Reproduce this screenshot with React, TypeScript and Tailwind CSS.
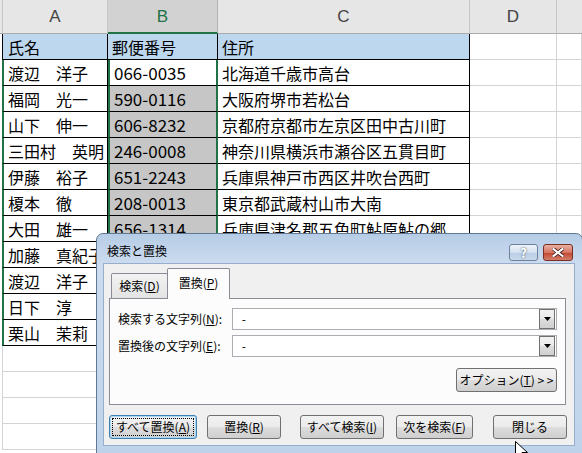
import React from 'react';

const rows: [string, string, string][] = [
    ['渡辺　洋子', '066-0035', '北海道千歳市高台'],
    ['福岡　光一', '590-0116', '大阪府堺市若松台'],
    ['山下　伸一', '606-8232', '京都府京都市左京区田中古川町'],
    ['三田村　英明', '246-0008', '神奈川県横浜市瀬谷区五貫目町'],
    ['伊藤　裕子', '651-2243', '兵庫県神戸市西区井吹台西町'],
    ['榎本　徹', '208-0013', '東京都武蔵村山市大南'],
    ['大田　雄一', '656-1314', '兵庫県津名郡五色町鮎原鮎の郷'],
    ['加藤　真紀子', '', ''],
    ['渡辺　洋子', '', ''],
    ['日下　淳', '', ''],
    ['栗山　茉莉', '', ''],
];

const grid = 'border-r border-b border-[#d4d4d4]';

function ColumnHeaders() {
    return (
        <div className="flex h-[34px] text-[17px] text-[#444] font-['Liberation_Sans',sans-serif]">
            <div className="w-[2px] bg-[#e6e6e6] border-b border-[#ababab]" />
            <div className="w-[106px] flex items-center justify-center bg-[#e6e6e6] border-l border-r border-b border-[#c6c6c6] border-b-[#ababab]">A</div>
            <div className="w-[110px] flex items-center justify-center bg-[#d2d2d2] text-[#217346] border-r border-[#b4b4b4] border-b-2 border-b-[#217346]">B</div>
            <div className="w-[252px] flex items-center justify-center bg-[#e6e6e6] border-r border-b border-[#c6c6c6] border-b-[#ababab]">C</div>
            <div className="w-[87px] flex items-center justify-center bg-[#e6e6e6] border-r border-b border-[#c6c6c6] border-b-[#ababab]">D</div>
            <div className="flex-1 bg-[#e6e6e6] border-b border-[#ababab]" />
        </div>
    );
}

function Sheet() {
    return (
        <div className="text-[16px] text-black font-['Noto_Sans_CJK_JP',sans-serif] leading-none">
            <ColumnHeaders />
            <div className="flex h-[26px]">
                <div className="w-[2px] bg-white" />
                <div className="w-[106px] flex items-center pl-[5px] bg-[#bdd7ee] border-l border-r border-b border-black">氏名</div>
                <div className="w-[110px] flex items-center pl-[4px] bg-[#bdd7ee] border-r border-b border-black">郵便番号</div>
                <div className="w-[252px] flex items-center pl-[4px] bg-[#bdd7ee] border-r border-b border-black">住所</div>
                <div className={`w-[87px] ${grid}`} />
                <div className={`flex-1 ${grid}`} />
            </div>
            {rows.map((r, i) => (
                <div key={i} className="flex h-[26px]">
                    <div className="w-[2px] bg-white" />
                    <div className="w-[106px] flex items-center pl-[4px] whitespace-nowrap overflow-hidden border-l-2 border-l-[#217346] border-r border-b border-black">{r[0]}</div>
                    <div className={`w-[110px] flex items-center pl-[4px] text-[17px] border-l-2 border-r-2 border-[#217346] border-b border-b-black ${i === 0 ? 'bg-white' : 'bg-[#c6c6c6]'} ${i === rows.length - 1 ? 'border-b-2 border-b-[#217346]' : ''}`}>{r[1]}</div>
                    <div className="w-[252px] flex items-center pl-[4px] whitespace-nowrap border-r border-b border-black">{r[2]}</div>
                    <div className={`w-[87px] ${grid}`} />
                    <div className={`flex-1 ${grid}`} />
                </div>
            ))}
            {[0, 1, 2, 3].map((i) => (
                <div key={i} className="flex h-[26px]">
                    <div className="w-[2px] bg-white" />
                    <div className={`w-[106px] border-l border-l-[#d4d4d4] ${grid}`} />
                    <div className={`w-[110px] ${grid}`} />
                    <div className={`w-[252px] ${grid}`} />
                    <div className={`w-[87px] ${grid}`} />
                    <div className={`flex-1 ${grid}`} />
                </div>
            ))}
        </div>
    );
}

const btnBg = 'bg-[linear-gradient(#f2f2f2,#ebebeb_48%,#dddddd_52%,#cfcfcf)]';

function Btn({ children, className = '', focused = false }: { children: React.ReactNode; className?: string; focused?: boolean }) {
    if (focused) {
        return (
            <div className={`h-[24px] p-[2px] rounded-[3px] border border-[#3c7fb1] shadow-[inset_0_0_0_1px_#a9d9f5] ${btnBg} ${className}`}>
                <div className="h-full w-full flex items-center justify-center border border-dotted border-black">{children}</div>
            </div>
        );
    }
    return (
        <div className={`h-[24px] flex items-center justify-center rounded-[3px] border border-[#707070] ${btnBg} ${className}`}>
            {children}
        </div>
    );
}

function ComboInput() {
    return (
        <div className="w-[326px] h-[22px] flex items-center border border-[#abadb3] bg-white">
            <span className="pl-[9px] text-[12px]">-</span>
            <div className={`ml-auto mr-px w-[16px] h-[20px] flex items-center justify-center border border-[#707070] ${btnBg}`}>
                <svg width="7" height="4" viewBox="0 0 7 4"><path d="M0 0h7L3.5 4z" fill="#000" /></svg>
            </div>
        </div>
    );
}

const U = ({ c }: { c: string }) => <span className="underline underline-offset-1">{c}</span>;

function Dialog() {
    return (
        <div className="absolute left-[96px] top-[233px] w-[487px] h-[222px] rounded-t-[7px] border border-[#5f7893] bg-[linear-gradient(#b6cce6,#cddcef_14%,#bed3ea)] flex flex-col font-['Noto_Sans_CJK_JP',sans-serif] text-[12px] text-black leading-none">
            <div className="h-[29px] flex items-start">
                <span className="ml-[10px] mt-[11px]">検索と置換</span>
                <div className="ml-auto mt-[10px] w-[29px] h-[17px] rounded-[3px] border border-[#6c829e] bg-[linear-gradient(#eef3f9,#d3e0ef_50%,#b9cde4_52%,#c8d9ec)] flex items-center justify-center text-[13px] font-bold text-white [text-shadow:0_0_2px_#2b3b55]">?</div>
                <div className="ml-[5px] mr-[9px] mt-[10px] w-[30px] h-[17px] rounded-[3px] border border-[#7a2d22] bg-[linear-gradient(#eab1a3,#d47561_50%,#c2452f_52%,#d3806b)] flex items-center justify-center">
                    <svg width="12" height="9" viewBox="0 0 12 9">
                        <path d="M1.5 1l9 7M10.5 1l-9 7" stroke="#3a1410" strokeWidth="3.6" strokeLinecap="square" />
                        <path d="M1.5 1l9 7M10.5 1l-9 7" stroke="#fff" strokeWidth="2.2" strokeLinecap="square" />
                    </svg>
                </div>
            </div>
            <div className="ml-[6px] mr-[7px] flex-1 mb-[8px] bg-[#f0f0f0] border border-[#96aecb] px-[5px] pt-[4px]">
                <div className="flex items-end h-[30px] pl-[2px]">
                    <div className="w-[57px] h-[25px] flex items-center justify-center border border-b-0 border-[#898c95] rounded-t-[2px] bg-[linear-gradient(#f3f3f3,#e3e3e3)]">
                        検索(<U c="D" />)
                    </div>
                    <div className="w-[63px] h-[31px] -mb-px -ml-px relative z-10 flex items-center justify-center pb-[3px] border border-b-0 border-[#898c95] rounded-t-[2px] bg-[#fcfcfc]">
                        置換(<U c="P" />)
                    </div>
                </div>
                <div className="w-[457px] h-[107px] border border-[#898c95] bg-[#fcfcfc] pl-[8px] pr-[8px] pt-[9px] flex flex-col">
                    <div className="flex items-center">
                        <span className="w-[114px]">検索する文字列(<U c="N" />):</span>
                        <ComboInput />
                    </div>
                    <div className="flex items-center mt-[5px]">
                        <span className="w-[114px]">置換後の文字列(<U c="E" />):</span>
                        <ComboInput />
                    </div>
                    <div className="flex justify-end mt-[11px]">
                        <Btn className="w-[101px]">オプション(<U c="T" />) &gt; &gt;</Btn>
                    </div>
                </div>
                <div className="flex mt-[10px]">
                    <Btn focused className="w-[88px]">すべて置換(<U c="A" />)</Btn>
                    <Btn className="w-[74px] ml-[10px]">置換(<U c="R" />)</Btn>
                    <Btn className="w-[84px] ml-[19px]">すべて検索(<U c="I" />)</Btn>
                    <Btn className="w-[77px] ml-[12px]">次を検索(<U c="F" />)</Btn>
                    <Btn className="w-[74px] ml-[20px]">閉じる</Btn>
                </div>
            </div>
        </div>
    );
}

export default function App() {
    return (
        <div className="relative w-[582px] h-[453px] overflow-hidden bg-white">
            <Sheet />
            <Dialog />
            <svg className="absolute left-[515px] top-[441px]" width="13" height="20" viewBox="0 0 13 20">
                <path d="M0.5 0.5v16l4-4 3 6.5 2.5-1-3-6.5h5.5z" fill="#fff" stroke="#000" strokeWidth="1" />
            </svg>
        </div>
    );
}
